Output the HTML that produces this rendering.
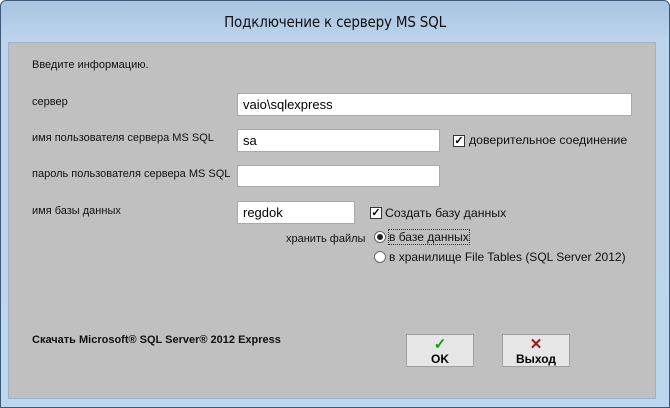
<!DOCTYPE html><html><head><style>
body{margin:0;width:670px;height:408px;overflow:hidden;font-family:"Liberation Sans",sans-serif;background:#fff}
.frame{position:absolute;left:0;top:0;width:668px;height:406px;border:1px solid #3c5a78;border-radius:6px 6px 0 0;background:linear-gradient(#a8c4e0,#bcd4ec 40px,#bcd6ee);}
.title{position:absolute;top:12px;width:100%;text-align:center;font-size:15px;color:#111;font-family:"DejaVu Sans Condensed","Liberation Sans",sans-serif;letter-spacing:-.2px}
.c{position:absolute;left:8px;top:42px;width:646px;height:355px;background:#c0c0c0;border:1px solid #9fb3c8}
.t{position:absolute;font-size:11px;color:#111;white-space:nowrap}
.in{position:absolute;background:#fff;border:1px solid #a9a9a9;box-sizing:border-box;font-size:13px;padding:3px 0 0 5px}
.cb{position:absolute;width:12px;height:12px;border:1px solid #333;background:#fff;box-sizing:border-box;font-size:11px;line-height:10px;text-align:center;font-weight:bold}
.rb{position:absolute;width:12px;height:12px;border-radius:50%;border:1px solid #666;background:#fff;box-sizing:border-box}
.lb{position:absolute;font-size:12.3px;color:#111;white-space:nowrap}
.btn{position:absolute;width:68px;height:33px;border:1px solid #a0a0a0;background:#e6e6e6;box-sizing:border-box;text-align:center;font-weight:bold;font-size:12px}
</style></head><body>
<div class="frame"><div class="title">Подключение к серверу MS SQL</div></div>
<div class="c"></div>
<div class="t" style="left:32px;top:59px">Введите информацию.</div>
<div class="t" style="left:32px;top:96px">сервер</div>
<div class="t" style="left:32px;top:132px">имя пользователя сервера MS SQL</div>
<div class="t" style="left:32px;top:168px">пароль пользователя сервера MS SQL</div>
<div class="t" style="left:32px;top:205px">имя базы данных</div>
<div class="t" style="left:286px;top:233px">хранить файлы</div>
<div class="in" style="left:237px;top:93px;width:395px;height:23px">vaio\sqlexpress</div>
<div class="in" style="left:237px;top:129px;width:203px;height:23px">sa</div>
<div class="in" style="left:237px;top:165px;width:203px;height:22px"></div>
<div class="in" style="left:237px;top:201px;width:118px;height:23px">regdok</div>
<div class="cb" style="left:453px;top:135px">✓</div>
<div class="lb" style="left:469px;top:133px">доверительное соединение</div>
<div class="cb" style="left:370px;top:207px">✓</div>
<div class="lb" style="left:385px;top:206px">Создать базу данных</div>
<div class="rb" style="left:374px;top:231px"><div style="margin:2px;width:6px;height:6px;border-radius:50%;background:#222"></div></div>
<div class="lb" style="left:389px;top:230px;outline:1px dotted #333;font-size:12px">в базе данных</div>
<div class="rb" style="left:374px;top:251px"></div>
<div class="lb" style="left:389px;top:250px;font-size:12px">в хранилище File Tables (SQL Server 2012)</div>
<div class="t" style="left:32px;top:334px;font-weight:bold">Скачать Microsoft® SQL Server® 2012 Express</div>
<div class="btn" style="left:406px;top:334px"><div style="color:#1a9a1a;font-size:15px;line-height:15px;margin-top:2px">✓</div>OK</div>
<div class="btn" style="left:502px;top:334px"><div style="color:#9a1a1a;font-size:15px;line-height:15px;margin-top:2px">✕</div>Выход</div>
</body></html>
